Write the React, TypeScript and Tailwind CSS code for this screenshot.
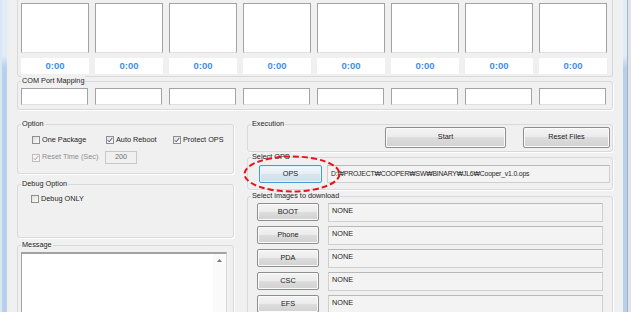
import React from "react";

const slots = Array.from({ length: 8 }, (_, i) => i);
const images = ["BOOT", "Phone", "PDA", "CSC", "EFS"];

function CheckBox({ checked, disabled }: { checked?: boolean; disabled?: boolean }) {
  return (
    <span
      className={`flex h-[8px] w-[8px] shrink-0 items-center justify-center border ${
        disabled ? "border-[#bdbdbd] bg-[#f4f4f4]" : "border-[#8e8f8f] bg-gradient-to-br from-[#dedede] to-[#fbfbfb]"
      }`}
    >
      {checked && (
        <svg viewBox="0 0 8 8" className="h-[6px] w-[6px]">
          <path d="M1 4.3 L3 6.4 L7 1.2" fill="none" stroke={disabled ? "#a3a3a3" : "#2c4d86"} strokeWidth="1.3" />
        </svg>
      )}
    </span>
  );
}

// group box: the border line runs through the middle of the caption
function Group({ label, className, children }: { label: string; className?: string; children?: React.ReactNode }) {
  return (
    <div className={`flex flex-col rounded-[3px] border border-[#d6dadd] shadow-[1px_1px_0_#fff] ${className ?? ""}`}>
      <div className="-mt-[6px] ml-[3px] w-fit bg-[#f0f0f0] px-[1px] leading-[10px] text-[#1e1e1e]">{label}</div>
      {children}
    </div>
  );
}

const btn =
  "flex shrink-0 items-center justify-center rounded-[2px] border border-[#8e8e8e] bg-[linear-gradient(#f4f4f4,#ebebeb_50%,#dddddd_50%,#d1d1d1)] shadow-[inset_0_0_0_1px_#fbfbfb] text-[#222]";
const field = "border border-[#cfcfcf] border-t-[#b9b9b9] bg-[#f3f3f3]";

export default function App() {
  return (
    <div className="flex h-[312px] w-[631px] overflow-hidden bg-[#f0f0f0] font-['Liberation_Sans',Arial,sans-serif] text-[7.3px] text-[#1e1e1e]">
      {/* window frame, left */}
      <div className="flex w-[9px] shrink-0">
        <div className="w-[2px] bg-[#dae6f3]" />
        <div className="w-[5px] bg-[linear-gradient(to_bottom,#e2ecf7_0px,#e2ecf7_55px,#b8d0eb_68px)]" />
        <div className="w-[2px] bg-[#eceff2]" />
      </div>

      <div className="relative flex w-[614px] shrink-0 flex-col pl-[8px]">
        {/* phone slots */}
        <div className="h-[77px] w-[596px] shrink-0 rounded-b-[3px] border-x border-b border-[#d6dadd] pl-[3px] pt-[3px]">
          <div className="grid grid-cols-[repeat(8,68px)] gap-x-[6px]">
            {slots.map((i) => (
              <div key={i} className="h-[50px] border border-[#a3a3a3] border-b-[#e0e0e0] bg-white" />
            ))}
          </div>
          <div className="mt-[5px] grid grid-cols-[repeat(8,68px)] gap-x-[6px]">
            {slots.map((i) => (
              <div key={i} className="flex h-[16px] items-center justify-center bg-white text-[9.5px] font-bold text-[#3f8ee6]">
                0:00
              </div>
            ))}
          </div>
        </div>

        <Group label="COM Port Mapping" className="mt-[4px] h-[29px] w-[596px] shrink-0">
          <div className="mt-[2px] grid grid-cols-[repeat(8,68px)] gap-x-[6px] pl-[3px]">
            {slots.map((i) => (
              <div key={i} className="h-[17px] w-[67px] border border-[#a3a3a3] border-b-[#e0e0e0] bg-white" />
            ))}
          </div>
        </Group>

        <div className="mt-[14px] flex">
          {/* left column */}
          <div className="flex w-[217px] shrink-0 flex-col">
            <Group label="Option" className="h-[50px] shrink-0">
              <div className="mt-[6px] flex h-[10px] items-center pl-[14px]">
                <span className="flex w-[74px] items-center gap-[2px]">
                  <CheckBox /> One Package
                </span>
                <span className="flex w-[67px] items-center gap-[2px]">
                  <CheckBox checked /> Auto Reboot
                </span>
                <span className="flex items-center gap-[2px]">
                  <CheckBox checked /> Protect OPS
                </span>
              </div>
              <div className="mt-[6px] flex h-[13px] items-center pl-[14px]">
                <span className="flex w-[73px] items-center gap-[2px] text-[#8d8d8d]">
                  <CheckBox checked disabled /> Reset Time (Sec)
                </span>
                <span className="flex h-[13px] w-[32px] items-center justify-center border border-[#c9c9c9] bg-[#f0f0f0] text-[#6f6f6f]">
                  200
                </span>
              </div>
            </Group>

            <Group label="Debug Option" className="mt-[10px] h-[54px] shrink-0">
              <div className="mt-[5px] flex h-[10px] items-center gap-[2px] pl-[13px]">
                <CheckBox /> Debug ONLY
              </div>
            </Group>

            <Group label="Message" className="mt-[7px] h-[90px] shrink-0">
              <div className="ml-[3px] mt-[2px] flex h-[80px] w-[206px] border-l border-r border-t-2 border-[#a2a2a2] border-r-[#dadada] bg-white">
                <div className="flex-1" />
                <div className="flex w-[13px] justify-center bg-[#fafafa] pt-[5px]">
                  <svg viewBox="0 0 5 3" className="h-[3px] w-[5px]">
                    <path d="M0 3 L2.5 0 L5 3 Z" fill="#7a7a7a" />
                  </svg>
                </div>
              </div>
            </Group>
          </div>

          {/* right column */}
          <div className="ml-[13px] flex w-[366px] shrink-0 flex-col">
            <Group label="Execution" className="h-[28px] shrink-0">
              <div className="-mt-[2px] flex h-[21px] justify-end gap-[17px] pr-[2px]">
                <button className={`${btn} h-[21px] w-[121px]`}>Start</button>
                <button className={`${btn} h-[21px] w-[87px]`}>Reset Files</button>
              </div>
            </Group>

            <Group label="Select OPS" className="mt-[5px] h-[33px] shrink-0">
              <div className="mt-[3px] flex h-[18px] items-center gap-[5px] pl-[11px]">
                <button className="flex h-[18px] w-[63px] shrink-0 items-center justify-center rounded-[2px] border border-[#4a98cf] bg-[linear-gradient(#f1f7fb,#e5eef5_50%,#d8e5ee_50%,#cfdfe9)] shadow-[inset_0_0_0_1px_#e4f3fc] text-[#222]">
                  OPS
                </button>
                <div className={`${field} flex h-[18px] w-[283px] items-center pl-[3px] text-[6.8px] tracking-[-0.15px]`}>
                  D:₩PROJECT₩COOPER₩SW₩BINARY₩JL6₩Cooper_v1.0.ops
                </div>
              </div>
            </Group>

            <Group label="Select images to download" className="mt-[6px] h-[140px] shrink-0">
              <div className="mt-[2px] flex flex-col gap-[5px] pl-[9px]">
                {images.map((name) => (
                  <div key={name} className="flex h-[18px] gap-[9px]">
                    <button className={`${btn} h-[18px] w-[62px]`}>{name}</button>
                    <div className={`${field} h-[19px] w-[275px] pl-[3px] pt-[2px]`}>NONE</div>
                  </div>
                ))}
              </div>
            </Group>
          </div>
        </div>

        {/* highlight mark around OPS button */}
        <svg className="pointer-events-none absolute left-[234px] top-[155px] h-[38px] w-[98px]" viewBox="0 0 98 38">
          <ellipse cx="49" cy="19" rx="47.5" ry="17.5" fill="none" stroke="#e5141c" strokeWidth="2" strokeDasharray="6 3" />
        </svg>
      </div>

      {/* window frame, right */}
      <div className="flex w-[8px] shrink-0">
        <div className="w-[4px] bg-[linear-gradient(to_bottom,#e2ecf7_0px,#e2ecf7_55px,#b8d0eb_68px)]" />
        <div className="w-[1px] bg-[#aab4bf]" />
        <div className="w-[3px] bg-[#dfe3e7]" />
      </div>
    </div>
  );
}
